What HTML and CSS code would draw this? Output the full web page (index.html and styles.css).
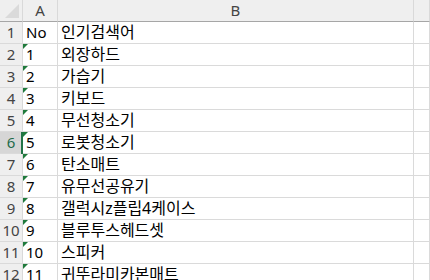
FILE: index.html
```html
<!DOCTYPE html>
<html lang="ko">
<head>
<meta charset="utf-8">
<link rel="stylesheet" href="styles.css">
</head>
<body>
<div class="sheet">
  <div class="hd corner"><span class="tri"></span></div>
  <div class="hd col">A</div>
  <div class="hd col">B</div>
  <div class="hd col"></div>

  <div class="rh">1</div><div class="c">No</div><div class="c k">인기검색어</div><div class="c"></div>
  <div class="rh">2</div><div class="c err">1</div><div class="c k">외장하드</div><div class="c"></div>
  <div class="rh">3</div><div class="c err">2</div><div class="c k">가습기</div><div class="c"></div>
  <div class="rh">4</div><div class="c err">3</div><div class="c k">키보드</div><div class="c"></div>
  <div class="rh">5</div><div class="c err">4</div><div class="c k">무선청소기</div><div class="c"></div>
  <div class="rh sel">6</div><div class="c err">5</div><div class="c k">로봇청소기</div><div class="c"></div>
  <div class="rh">7</div><div class="c err">6</div><div class="c k">탄소매트</div><div class="c"></div>
  <div class="rh">8</div><div class="c err">7</div><div class="c k">유무선공유기</div><div class="c"></div>
  <div class="rh">9</div><div class="c err">8</div><div class="c k">갤럭시z플립4케이스</div><div class="c"></div>
  <div class="rh">10</div><div class="c err">9</div><div class="c k">블루투스헤드셋</div><div class="c"></div>
  <div class="rh">11</div><div class="c err">10</div><div class="c k">스피커</div><div class="c"></div>
  <div class="rh">12</div><div class="c err">11</div><div class="c k">귀뚜라미카본매트</div><div class="c"></div>
</div>
</body>
</html>
```
FILE: styles.css
```css
html, body {
  margin: 0;
  padding: 0;
  background: #ffffff;
  overflow: hidden;
}
.sheet {
  display: grid;
  grid-template-columns: 23px 35px 356px 1fr;
  grid-auto-rows: 22px;
  width: 430px;
  font-family: "Noto Sans", "Noto Sans CJK KR", sans-serif;
  font-size: 15px;
  color: #000;
}
.hd {
  background: #efefef;
  border-right: 1px solid #d9d9d9;
  border-bottom: 1px solid #a6a6a6;
  color: #444;
  display: flex;
  align-items: center;
  justify-content: center;
  line-height: 21px;
  font-size: 15px;
}
.corner {
  position: relative;
}
.tri {
  position: absolute;
  right: 3px;
  bottom: 3px;
  width: 0;
  height: 0;
  border-left: 14px solid transparent;
  border-bottom: 14px solid #dadada;
}
.rh {
  background: #efefef;
  border-right: 1px solid #d9d9d9;
  border-bottom: 1px solid #dadada;
  color: #444;
  text-align: center;
  line-height: 21px;
  font-size: 15px;
  position: relative;
}
.rh.sel {
  background: #d6d6d6;
  color: #1e6b4a;
}
.rh.sel::after {
  content: "";
  position: absolute;
  right: -1px;
  top: 0;
  bottom: -1px;
  width: 2px;
  background: #217346;
}
.c {
  border-right: 1px solid #dadada;
  border-bottom: 1px solid #dadada;
  padding-left: 3px;
  line-height: 21px;
  white-space: nowrap;
  overflow: hidden;
  position: relative;
}
.c.k {
  font-size: 16px;
}
.err::before {
  content: "";
  position: absolute;
  left: 0;
  top: 0;
  width: 0;
  height: 0;
  border-top: 5px solid #1f7a3c;
  border-right: 5px solid transparent;
}
```
